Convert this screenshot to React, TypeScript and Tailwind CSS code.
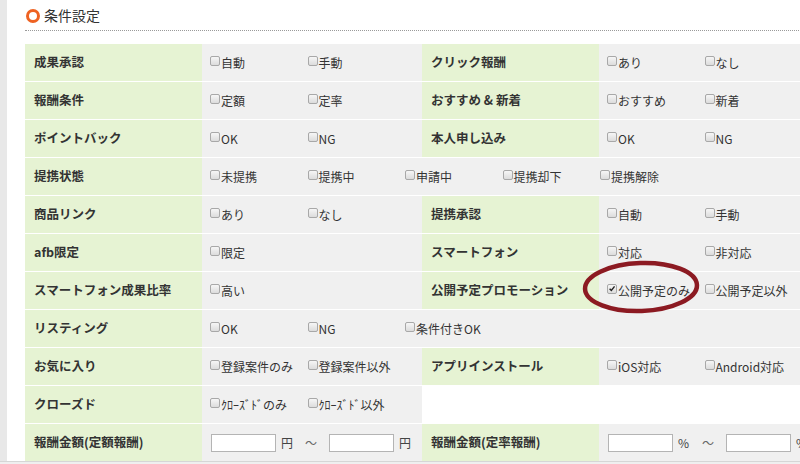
import React from "react";

type Opt = { label: string; checked?: boolean };

type Row =
  | { kind: "pair"; l1: string; v1: Opt[]; l2: string; v2: Opt[] }
  | { kind: "wide"; l1: string; v1: Opt[] }
  | { kind: "half"; l1: string; v1: Opt[] }
  | { kind: "amount" };

const o = (...labels: string[]): Opt[] => labels.map((label) => ({ label }));

const rows: Row[] = [
  { kind: "pair", l1: "成果承認", v1: o("自動", "手動"), l2: "クリック報酬", v2: o("あり", "なし") },
  { kind: "pair", l1: "報酬条件", v1: o("定額", "定率"), l2: "おすすめ & 新着", v2: o("おすすめ", "新着") },
  { kind: "pair", l1: "ポイントバック", v1: o("OK", "NG"), l2: "本人申し込み", v2: o("OK", "NG") },
  { kind: "wide", l1: "提携状態", v1: o("未提携", "提携中", "申請中", "提携却下", "提携解除") },
  { kind: "pair", l1: "商品リンク", v1: o("あり", "なし"), l2: "提携承認", v2: o("自動", "手動") },
  { kind: "pair", l1: "afb限定", v1: o("限定"), l2: "スマートフォン", v2: o("対応", "非対応") },
  {
    kind: "pair",
    l1: "スマートフォン成果比率",
    v1: o("高い"),
    l2: "公開予定プロモーション",
    v2: [{ label: "公開予定のみ", checked: true }, { label: "公開予定以外" }],
  },
  { kind: "wide", l1: "リスティング", v1: o("OK", "NG", "条件付きOK") },
  { kind: "pair", l1: "お気に入り", v1: o("登録案件のみ", "登録案件以外"), l2: "アプリインストール", v2: o("iOS対応", "Android対応") },
  { kind: "half", l1: "クローズド", v1: o("ｸﾛｰｽﾞﾄﾞのみ", "ｸﾛｰｽﾞﾄﾞ以外") },
  { kind: "amount" },
];

function Box({ checked }: { checked?: boolean }) {
  return (
    <span className="relative top-[-2px] mr-[1px] inline-flex h-[10px] w-[10px] shrink-0 items-center justify-center rounded-[2px] border border-[#a8a8a8] bg-gradient-to-b from-[#f6f6f6] to-[#dcdcdc]">
      {checked && (
        <svg viewBox="0 0 10 10" className="h-[9px] w-[9px]">
          <path d="M2 5.2 L4.2 7.4 L8.2 2.4" fill="none" stroke="#222" strokeWidth="1.8" />
        </svg>
      )}
    </span>
  );
}

function Options({ items }: { items: Opt[] }) {
  return (
    <div className="flex h-full items-center bg-[#f0f0f0] pl-[8px]">
      {items.map((it) => (
        <span key={it.label} className="flex w-[97.5px] shrink-0 items-center whitespace-nowrap text-[12px] text-[#333]">
          <Box checked={it.checked} />
          {it.label}
        </span>
      ))}
    </div>
  );
}

function Label({ text }: { text: string }) {
  return (
    <div className="flex h-full items-center bg-[#e6f3d3] pl-[9px] text-[12.5px] font-bold text-[#333]">{text}</div>
  );
}

function Amount({ unit }: { unit: string }) {
  return (
    <div className="flex h-full items-center bg-[#f0f0f0] pl-[9px] text-[12px] text-[#444]">
      <span className="h-[18px] w-[65px] shrink-0 border border-[#b4b4b4] bg-white" />
      <span className="ml-[5px] w-[14px]">{unit}</span>
      <span className="ml-[10px] w-[24px] text-[#666]">〜</span>
      <span className="h-[18px] w-[65px] shrink-0 border border-[#b4b4b4] bg-white" />
      <span className="ml-[5px]">{unit}</span>
    </div>
  );
}

export default function App() {
  return (
    <div
      className="relative flex h-[464px] w-[800px] flex-col overflow-hidden bg-white"
      style={{ fontFamily: '"Noto Sans CJK JP", "Noto Sans", sans-serif' }}
    >
      <div className="flex flex-1">
        <div className="w-[7px] shrink-0 bg-[#e8e8e8]" />
        <div className="flex-1 pl-[18px]">
          {/* header */}
          <div className="flex h-[31px] items-center border-b border-dotted border-[#9a9a9a] pl-[1px] pt-[1px]">
            <span className="h-[14px] w-[14px] rounded-full border-[3px] border-[#ee6222]" />
            <span className="ml-[4px] text-[14px] text-[#333]">条件設定</span>
          </div>
          <div className="mt-[13px] grid w-[800px] grid-cols-[177px_220px_177px_226px]">
            {rows.map((r, i) => {
              const cls = "h-[38px] border-b border-white";
              if (r.kind === "pair")
                return (
                  <React.Fragment key={i}>
                    <div className={cls}><Label text={r.l1} /></div>
                    <div className={cls}><Options items={r.v1} /></div>
                    <div className={cls}><Label text={r.l2} /></div>
                    <div className={cls}><Options items={r.v2} /></div>
                  </React.Fragment>
                );
              if (r.kind === "wide")
                return (
                  <React.Fragment key={i}>
                    <div className={cls}><Label text={r.l1} /></div>
                    <div className={`${cls} col-span-3`}><Options items={r.v1} /></div>
                  </React.Fragment>
                );
              if (r.kind === "half")
                return (
                  <React.Fragment key={i}>
                    <div className={cls}><Label text={r.l1} /></div>
                    <div className={cls}><Options items={r.v1} /></div>
                    <div className={`${cls} col-span-2 bg-white`} />
                  </React.Fragment>
                );
              return (
                <React.Fragment key={i}>
                  <div className="h-[37px]"><Label text="報酬金額(定額報酬)" /></div>
                  <div className="h-[37px]"><Amount unit="円" /></div>
                  <div className="h-[37px]"><Label text="報酬金額(定率報酬)" /></div>
                  <div className="h-[37px]"><Amount unit="%" /></div>
                </React.Fragment>
              );
            })}
          </div>
        </div>
      </div>
      <div className="h-[4px] shrink-0 border-t border-[#d6d6d6] bg-[#efefef]" />

      {/* red marker ellipse */}
      <svg className="pointer-events-none absolute left-[582px] top-[259px]" width="120" height="56" viewBox="0 0 120 56">
        <ellipse cx="59" cy="28" rx="56" ry="24" fill="none" stroke="#8c1a22" strokeWidth="4.5" transform="rotate(-2 59 28)" />
      </svg>
    </div>
  );
}
